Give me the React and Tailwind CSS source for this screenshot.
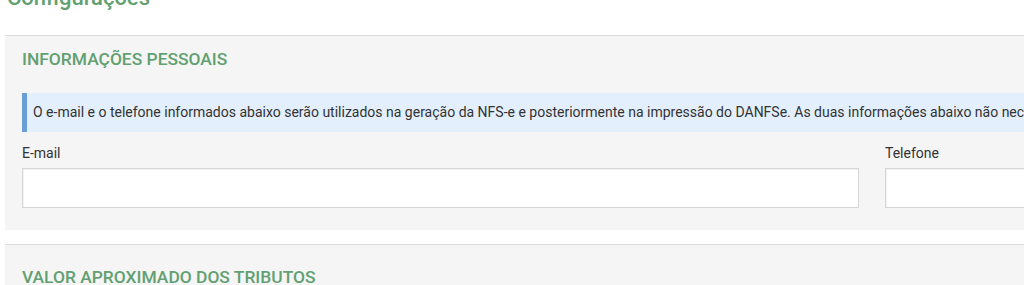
import React from 'react';

const Panel = ({ title, top, children }) => (
  <div className={`bg-[#f5f5f5] border-t border-[#dddddd] pl-[17px] pb-[22px] ${top}`}>
    <h2 className="text-[17.4px] font-medium leading-[20px] text-[#62a072]">{title}</h2>
    {children}
  </div>
);

const App = () => {
  return (
    <div className="h-[285px] w-[1024px] overflow-hidden bg-white font-['Roboto',sans-serif] text-[#333333]">
      <h1 className="-mt-[14px] ml-[7px] text-[22px] font-medium leading-[24px] text-[#62a072]">Configurações</h1>

      <div className="ml-[5px] mt-[25px] w-[1100px]">
        <Panel title="INFORMAÇÕES PESSOAIS" top="pt-[13px]">
          <div className="mt-[24px] flex h-[39px] items-center whitespace-nowrap border-l-[5px] border-[#6a9fd6] bg-[#e3effc] pl-[6px] text-[14px]">
            O e-mail e o telefone informados abaixo serão utilizados na geração da NFS-e e posteriormente na impressão do DANFSe. As duas informações abaixo não necessitam ser preenchidas.
          </div>

          <div className="mt-[12px] flex gap-[26px]">
            <div className="flex w-[837px] shrink-0 flex-col">
              <label className="text-[14px] leading-[18px]">E-mail</label>
              <input className="mt-[6px] h-[40px] border border-[#d6d6d6] bg-white shadow-[inset_1px_1px_1px_rgba(0,0,0,0.06)] outline-none" />
            </div>
            <div className="flex w-[220px] shrink-0 flex-col">
              <label className="text-[14px] leading-[18px]">Telefone</label>
              <input className="mt-[6px] h-[40px] border border-[#d6d6d6] bg-white shadow-[inset_1px_1px_1px_rgba(0,0,0,0.06)] outline-none" />
            </div>
          </div>
        </Panel>

        <div className="mt-[14px]">
          <Panel title="VALOR APROXIMADO DOS TRIBUTOS" top="pt-[22px]">
            <div className="h-[40px]" />
          </Panel>
        </div>
      </div>
    </div>
  );
};

export default App;
